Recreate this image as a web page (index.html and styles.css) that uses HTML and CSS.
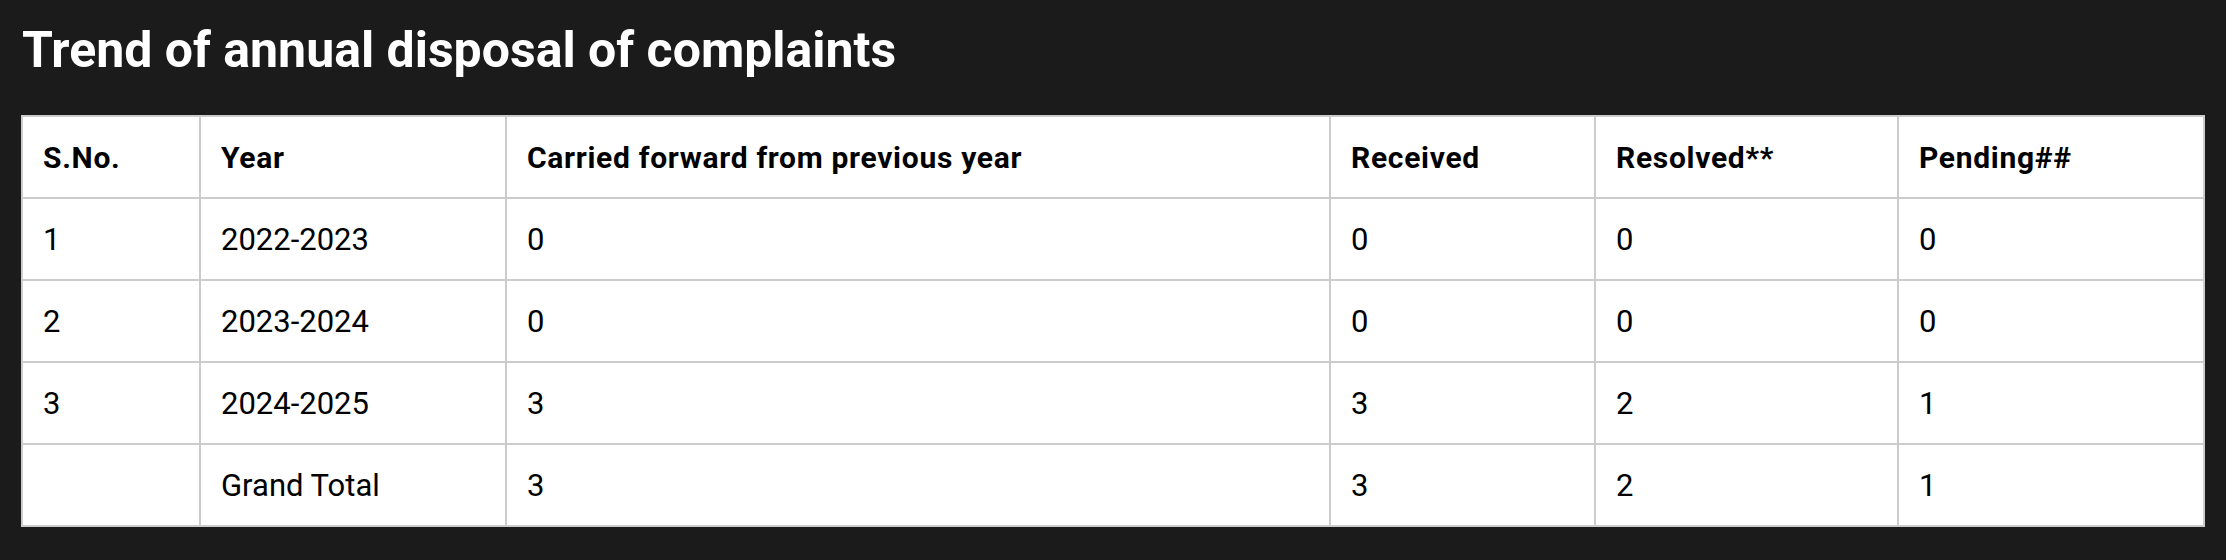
FILE: index.html
```html
<!DOCTYPE html>
<html lang="en">
<head>
<meta charset="utf-8">
<title>Trend of annual disposal of complaints</title>
<link rel="stylesheet" href="styles.css">
</head>
<body>
<main class="page">
  <h1 class="title">Trend of annual disposal of complaints</h1>
  <table class="data-table">
    <colgroup>
      <col class="c-sno">
      <col class="c-year">
      <col class="c-carried">
      <col class="c-received">
      <col class="c-resolved">
      <col class="c-pending">
    </colgroup>
    <thead>
      <tr>
        <th>S.No.</th>
        <th>Year</th>
        <th>Carried forward from previous year</th>
        <th>Received</th>
        <th>Resolved**</th>
        <th>Pending##</th>
      </tr>
    </thead>
    <tbody>
      <tr><td>1</td><td>2022-2023</td><td>0</td><td>0</td><td>0</td><td>0</td></tr>
      <tr><td>2</td><td>2023-2024</td><td>0</td><td>0</td><td>0</td><td>0</td></tr>
      <tr><td>3</td><td>2024-2025</td><td>3</td><td>3</td><td>2</td><td>1</td></tr>
      <tr><td></td><td>Grand Total</td><td>3</td><td>3</td><td>2</td><td>1</td></tr>
    </tbody>
  </table>
</main>
</body>
</html>
```

FILE: styles.css
```css
html, body {
  margin: 0;
  padding: 0;
  background: #1b1b1b;
}

.page {
  padding: 0 23px 0 21px;
  font-family: Roboto, "Liberation Sans", sans-serif;
}

.title {
  margin: 25px 0 40px 1px;
  font-size: 50px;
  line-height: 50px;
  font-weight: 700;
  color: #ffffff;
  letter-spacing: 0;
}

.data-table {
  width: 2182px;
  border-collapse: collapse;
  background: #ffffff;
  table-layout: fixed;
}

.c-sno { width: 178px; }
.c-year { width: 306px; }
.c-carried { width: 824px; }
.c-received { width: 265px; }
.c-resolved { width: 303px; }
.c-pending { width: 306px; }

.data-table th,
.data-table td {
  border: 2px solid #cccccc;
  height: 80px;
  padding: 0 20px;
  text-align: left;
  vertical-align: middle;
  color: #000000;
}

.data-table th {
  font-size: 30px;
  font-weight: 700;
  letter-spacing: 0.7px;
}

.data-table td {
  font-size: 31px;
  font-weight: 400;
}
```
